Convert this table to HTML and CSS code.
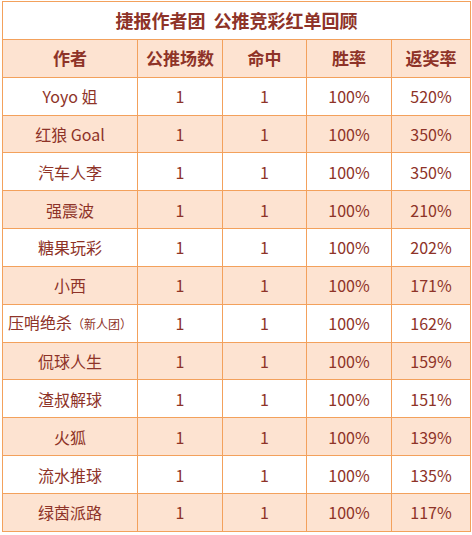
FILE: index.html
```html
<!DOCTYPE html>
<html lang="zh">
<head>
<meta charset="utf-8">
<link rel="stylesheet" href="styles.css">
</head>
<body>
<div class="wrap">
<table class="board">
  <colgroup>
    <col class="c1"><col class="c2"><col class="c3"><col class="c4"><col class="c5">
  </colgroup>
  <tr class="title"><td colspan="5">捷报作者团&nbsp;&nbsp;公推竞彩红单回顾</td></tr>
  <tr class="head"><td>作者</td><td>公推场数</td><td>命中</td><td>胜率</td><td>返奖率</td></tr>
  <tr><td>Yoyo 姐</td><td>1</td><td>1</td><td>100%</td><td>520%</td></tr>
  <tr class="alt"><td>红狼 Goal</td><td>1</td><td>1</td><td>100%</td><td>350%</td></tr>
  <tr><td>汽车人李</td><td>1</td><td>1</td><td>100%</td><td>350%</td></tr>
  <tr class="alt"><td>强震波</td><td>1</td><td>1</td><td>100%</td><td>210%</td></tr>
  <tr><td>糖果玩彩</td><td>1</td><td>1</td><td>100%</td><td>202%</td></tr>
  <tr class="alt"><td>小西</td><td>1</td><td>1</td><td>100%</td><td>171%</td></tr>
  <tr><td>压哨绝杀<span class="small">（新人团）</span></td><td>1</td><td>1</td><td>100%</td><td>162%</td></tr>
  <tr class="alt"><td>侃球人生</td><td>1</td><td>1</td><td>100%</td><td>159%</td></tr>
  <tr><td>渣叔解球</td><td>1</td><td>1</td><td>100%</td><td>151%</td></tr>
  <tr class="alt"><td>火狐</td><td>1</td><td>1</td><td>100%</td><td>139%</td></tr>
  <tr><td>流水推球</td><td>1</td><td>1</td><td>100%</td><td>135%</td></tr>
  <tr class="alt"><td>绿茵派路</td><td>1</td><td>1</td><td>100%</td><td>117%</td></tr>
</table>
</div>
</body>
</html>
```

FILE: styles.css
```css
html, body {
  margin: 0;
  padding: 0;
  background: #ffffff;
}
.wrap {
  padding: 1px 0 0 2px;
}
.board {
  width: 468px;
  border-collapse: collapse;
  table-layout: fixed;
  font-family: "Noto Sans CJK SC", "Noto Sans", sans-serif;
  font-size: 16px;
  color: #8e3328;
}
.c1 { width: 135px; }
.c2 { width: 85px; }
.c3 { width: 84px; }
.c4 { width: 85px; }
.c5 { width: 79px; }
.board td {
  border: 1px solid #f3a15c;
  height: 36.85px;
  padding: 0;
  text-align: center;
  vertical-align: middle;
  line-height: 20px;
  white-space: nowrap;
}
.title td {
  font-size: 18px;
  font-weight: bold;
  background: #ffffff;
}
.head td {
  font-size: 17px;
  font-weight: bold;
  background: #fde3d1;
}
.alt td {
  background: #fde3d1;
}
.small {
  font-size: 12px;
}
```
